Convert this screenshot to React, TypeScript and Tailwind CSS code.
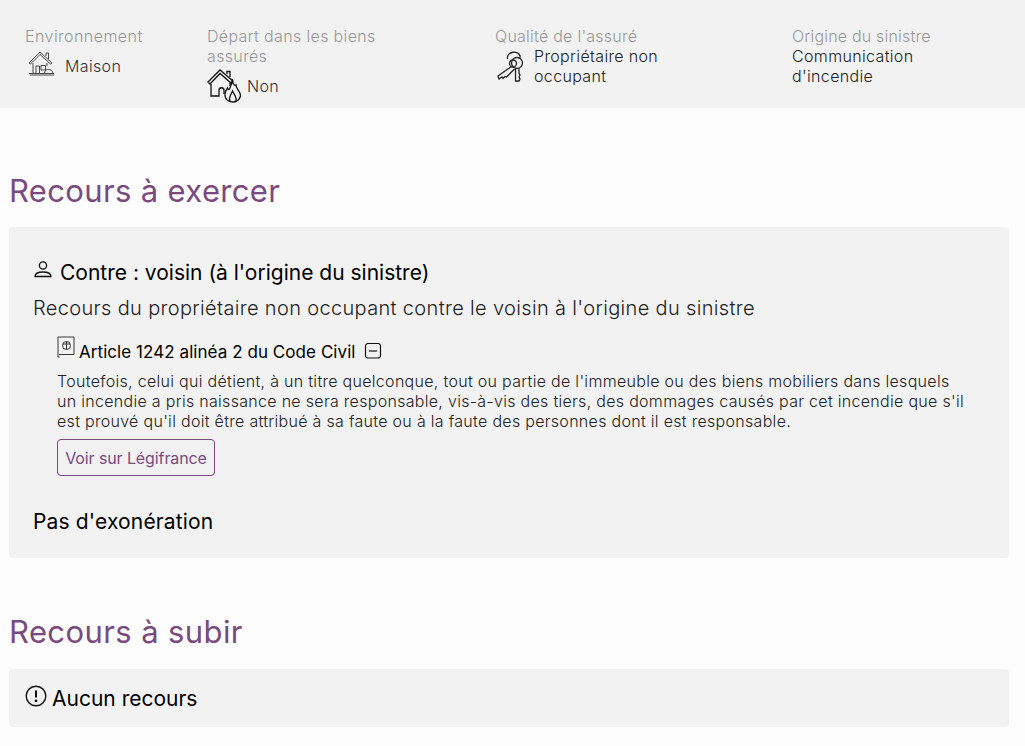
import React from 'react';

const font = { fontFamily: 'Inter, "Liberation Sans", sans-serif' };

const HouseIcon = () => (
  <svg width="28" height="28" viewBox="0 0 28 28" fill="none" stroke="#333" strokeWidth="0.9" className="shrink-0">
    <path d="M2 13 L13 2 L25 13 L23.500 14 L13 4.500 L3.500 14 Z M19 6 V3 H21.500 V9" />
    <path d="M6 13 V23 M20 13 V16" />
    <path d="M9 23 V16 H12.500 V23 M14 15.500 H18.500 V20 H14 Z" />
    <path d="M2 23.500 H27 M3 25 H27 M17.500 23 C18 20 20 19 21.500 19.500 C24 19.500 25.500 21 26 23" />
  </svg>
);

const HouseFireIcon = () => (
  <svg width="34" height="34" viewBox="0 0 34 34" fill="none" stroke="#111" strokeWidth="1.3" className="shrink-0">
    <path d="M1 13 L13 1 L26 12 L24 14 L13 4.500 L3 15 Z M20 5 V2.500 H23 V8" />
    <path d="M4 15 V27 H12 V21 C12 18 17 18 17 21 V25 M23 14 V17" />
    <path d="M25 10 C26 15 27 17 29 16 C28.500 19 33 22 33.500 26 C33.500 30 30 33 26 33 C21 33 17.500 30 18 25 C18 23 19 21 20.500 19 C21 20.500 22 21 22.500 20 C24 17 25.500 14 25 10 Z" fill="#f2f2f2" />
    <path d="M23.500 33 C20.500 29 24 26 25.500 22 C27 26 31 29 28.500 33" />
  </svg>
);

const KeysIcon = () => (
  <svg width="32" height="32" viewBox="0 0 32 32" fill="none" stroke="#222" strokeWidth="1.3" className="shrink-0">
    <path d="M11.500 9 C10 1 23 0 24 6 C24.300 7 24 8 23.500 9" />
    <circle cx="21" cy="13" r="5.500" />
    <circle cx="17" cy="13.500" r="3.500" />
    <path d="M15.500 16.500 L2 26 L3 29 L6 27 L7 28.500 L9 26.500 L10.500 27 L18.500 19" />
    <path d="M19.500 18.500 V31 H23 L24 29 L23 27 L24 25 L23 23 V18.500" />
  </svg>
);

const PersonIcon = () => (
  <svg width="20" height="20" viewBox="0 0 20 20" fill="none" stroke="#111" strokeWidth="1.3">
    <circle cx="10" cy="5.500" r="3.600" />
    <path d="M2 16.500 C2 13.500 5 12 10 12 C15 12 18 13.500 18 16.500 Z" />
  </svg>
);

const LawIcon = () => (
  <svg width="18" height="22" viewBox="0 0 18 22" fill="none" stroke="#222" strokeWidth="0.9" className="shrink-0">
    <path d="M2 1 H17 V18.500 H2 M2 1 H1 V21 H2.500" />
    <circle cx="9.500" cy="9.500" r="4" />
    <path d="M9.500 5.500 V13.500 M6 8 H13" />
  </svg>
);

const MinusBoxIcon = () => (
  <svg width="18" height="18" viewBox="0 0 18 18" fill="none" stroke="#111" strokeWidth="1.2" className="shrink-0">
    <rect x="1.500" y="1.500" width="15" height="14.500" rx="2.500" />
    <path d="M5 9 H13" />
  </svg>
);

const AlertIcon = () => (
  <svg width="22" height="22" viewBox="0 0 22 22" fill="none" stroke="#111" strokeWidth="1.4" className="shrink-0">
    <circle cx="11" cy="11" r="9.800" />
    <path d="M11 5.500 V12.500" strokeWidth="2" />
    <circle cx="11" cy="15.800" r="0.700" fill="#111" />
  </svg>
);

const App: React.FC = () => {
  return (
    <div className="min-h-[746px] bg-[#fdfdfd] text-black overflow-hidden" style={font}>
      <div className="flex h-[108px] bg-[#f2f2f2] pt-[26px] text-[16px] leading-[20px] font-light tracking-[0.35px]">
        <div className="w-[207px] pl-[25px]">
          <div className="text-[#999999] tracking-[0.45px]">Environnement</div>
          <div className="flex h-[40px] items-center gap-[10px] pl-[2px] text-[#333333]">
            <span className="-mt-[4px]"><HouseIcon /></span>
            <span>Maison</span>
          </div>
        </div>
        <div className="w-[288px]">
          <div className="w-[200px] text-[#999999]">Départ dans les biens assurés</div>
          <div className="flex h-[40px] items-center gap-[6px] text-[#333333]">
            <HouseFireIcon />
            <span>Non</span>
          </div>
        </div>
        <div className="w-[297px]">
          <div className="text-[#999999] tracking-[0.25px]">Qualité de l'assuré</div>
          <div className="flex items-center gap-[7px] pl-[1px] text-[#222222]">
            <KeysIcon />
            <span className="-ml-[1px] w-[140px]">Propriétaire non occupant</span>
          </div>
        </div>
        <div className="w-[200px]">
          <div className="text-[#999999] tracking-[0.2px]">Origine du sinistre</div>
          <div className="w-[170px] text-[#222222]">Communication d'incendie</div>
        </div>
      </div>

      <div className="pl-[9px] pr-[16px]">
        <h2 className="mt-[64px] text-[31px] leading-[38px] font-normal tracking-[0.35px] text-[#7a4a7e]">Recours à exercer</h2>

        <div className="mt-[17px] h-[331px] rounded bg-[#f2f2f2] px-[24px] pt-[32px]">
          <div className="flex items-center gap-[7px] text-[21px] leading-[28px]">
            <span className="-mt-[6px]"><PersonIcon /></span>
            <span>Contre : voisin (à l'origine du sinistre)</span>
          </div>
          <div className="mt-[7px] text-[20px] leading-[28px] font-light tracking-[0.34px] text-[#222222]">
            Recours du propriétaire non occupant contre le voisin à l'origine du sinistre
          </div>
          <div className="mt-[18px] pl-[24px]">
            <div className="flex items-center gap-[4px] text-[17px] leading-[24px] tracking-[0.06px]">
              <span className="-mt-[10px]"><LawIcon /></span>
              <span>Article 1242 alinéa 2 du Code Civil</span>
              <span className="ml-[4px] -mt-[3px]"><MinusBoxIcon /></span>
            </div>
            <p className="mt-[7px] w-[912px] text-[16px] leading-[20px] font-light tracking-[0.3px] text-[#222222]">
              Toutefois, celui qui détient, à un titre quelconque, tout ou partie de l'immeuble ou des biens mobiliers dans lesquels un incendie a pris naissance ne sera responsable, vis-à-vis des tiers, des dommages causés par cet incendie que s'il est prouvé qu'il doit être attribué à sa faute ou à la faute des personnes dont il est responsable.
            </p>
            <button className="mt-[8px] h-[37px] w-[158px] rounded border border-[#7a4a7e] text-[16px] tracking-[-0.1px] text-[#7a4a7e]">
              Voir sur Légifrance
            </button>
          </div>
          <div className="mt-[32px] text-[21px] leading-[28px] tracking-[0.16px]">Pas d'exonération</div>
        </div>

        <h2 className="mt-[55px] text-[31px] leading-[38px] font-normal tracking-[0.4px] text-[#7a4a7e]">Recours à subir</h2>

        <div className="mt-[18px] flex h-[58px] items-center gap-[5px] rounded bg-[#f2f2f2] pl-[16px] pt-[2px] text-[21px]">
          <span className="-mt-[6px]"><AlertIcon /></span>
          <span>Aucun recours</span>
        </div>
      </div>
    </div>
  );
};

export default App;
